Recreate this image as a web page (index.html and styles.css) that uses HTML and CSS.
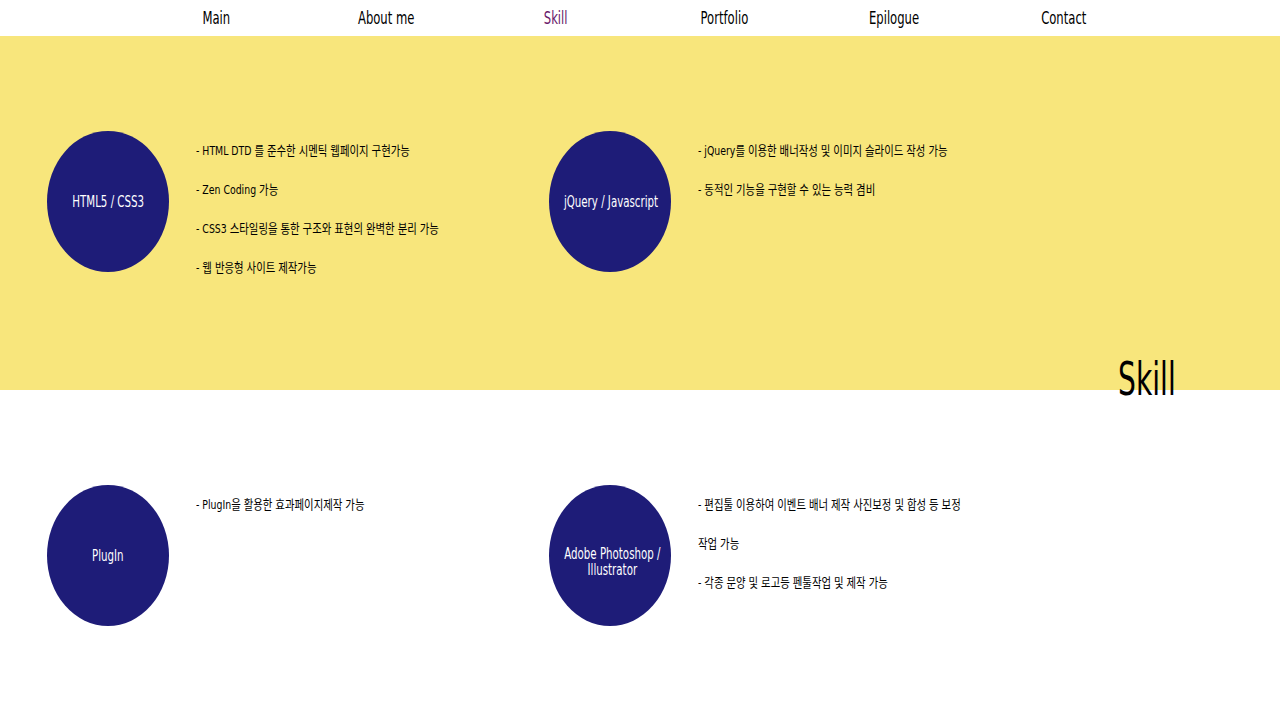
FILE: index.html
```html
<!DOCTYPE html>
<html lang="ko">
<head>
<meta charset="utf-8">
<title>Skill</title>
<link rel="stylesheet" href="styles.css">
</head>
<body>
<header class="nav">
  <ul class="nav-list">
    <li><a href="#">Main</a></li>
    <li><a href="#">About me</a></li>
    <li><a href="#" class="active">Skill</a></li>
    <li><a href="#">Portfolio</a></li>
    <li><a href="#">Epilogue</a></li>
    <li><a href="#">Contact</a></li>
  </ul>
</header>
<main class="skill-page">
  <section class="skill-row yellow">
    <div class="skill">
      <div class="circle"><span class="circle-text">HTML5 / CSS3</span></div>
      <ul class="desc">
        <li>- HTML DTD 를 준수한 시멘틱 웹페이지 구현가능</li>
        <li>- Zen Coding 가능</li>
        <li>- CSS3 스타일링을 통한 구조와 표현의 완벽한 분리 가능</li>
        <li>- 웹 반응형 사이트 제작가능</li>
      </ul>
    </div>
    <div class="skill">
      <div class="circle"><span class="circle-text">jQuery / Javascript</span></div>
      <ul class="desc">
        <li>- jQuery를 이용한 배너작성 및 이미지 슬라이드 작성 가능</li>
        <li>- 동적인 기능을 구현할 수 있는 능력 겸비</li>
      </ul>
    </div>
  </section>
  <section class="skill-row white">
    <div class="skill">
      <div class="circle"><span class="circle-text">PlugIn</span></div>
      <ul class="desc">
        <li>- PlugIn을 활용한 효과페이지제작 가능</li>
      </ul>
    </div>
    <div class="skill">
      <div class="circle"><span class="circle-text">Adobe Photoshop /<br>Illustrator</span></div>
      <ul class="desc">
        <li>- 편집툴 이용하여 이벤트 배너 제작 사진보정 및 합성 등 보정<br>작업 가능</li>
        <li>- 각종 문양 및 로고등 펜툴작업 및 제작 가능</li>
      </ul>
    </div>
  </section>
  <h2 class="section-title">Skill</h2>
</main>
</body>
</html>
```
FILE: styles.css
```css
html, body {
  margin: 0;
  padding: 0;
  background: #ffffff;
}
body {
  font-family: "DejaVu Sans Condensed", "Noto Sans CJK KR", sans-serif;
  color: #000;
}
ul {
  list-style: none;
  margin: 0;
  padding: 0;
}
.nav {
  height: 36px;
  background: #fff;
}
.nav-list {
  width: 1017px;
  margin: 0 auto;
  display: grid;
  grid-template-columns: repeat(6, 1fr);
  height: 36px;
  align-items: center;
}
.nav-list li {
  text-align: center;
}
.nav-list a {
  display: inline-block;
  font-size: 17px;
  color: #000;
  text-decoration: none;
  transform: scaleX(0.76);
}
.nav-list a.active {
  color: #6a1a6a;
}
.skill-page {
  position: relative;
}
.skill-row {
  height: 354px;
  box-sizing: border-box;
  padding-top: 95px;
  display: flex;
}
.skill-row.yellow {
  background: #f8e67c;
}
.skill-row.white {
  background: #fff;
}
.skill {
  width: 502px;
  box-sizing: border-box;
  padding-left: 47px;
  display: flex;
  gap: 27px;
  align-items: flex-start;
}
.circle {
  flex: none;
  width: 122px;
  height: 141px;
  box-sizing: border-box;
  padding-top: 61px;
  border-radius: 50%;
  background: #1e1c78;
  color: #fff;
  text-align: center;
}
.circle-text {
  display: inline-block;
  white-space: nowrap;
  font-size: 15px;
  line-height: 16px;
  transform: scaleX(0.76);
  transform-origin: center top;
}
.desc {
  font-size: 13px;
  line-height: 39px;
  margin-top: 0;
  white-space: nowrap;
  transform: scaleX(0.8);
  transform-origin: left top;
}
.section-title {
  position: absolute;
  right: 104px;
  top: 313px;
  margin: 0;
  font-size: 46px;
  font-weight: normal;
  line-height: 60px;
  transform: scaleX(0.68);
  transform-origin: right center;
}
```
